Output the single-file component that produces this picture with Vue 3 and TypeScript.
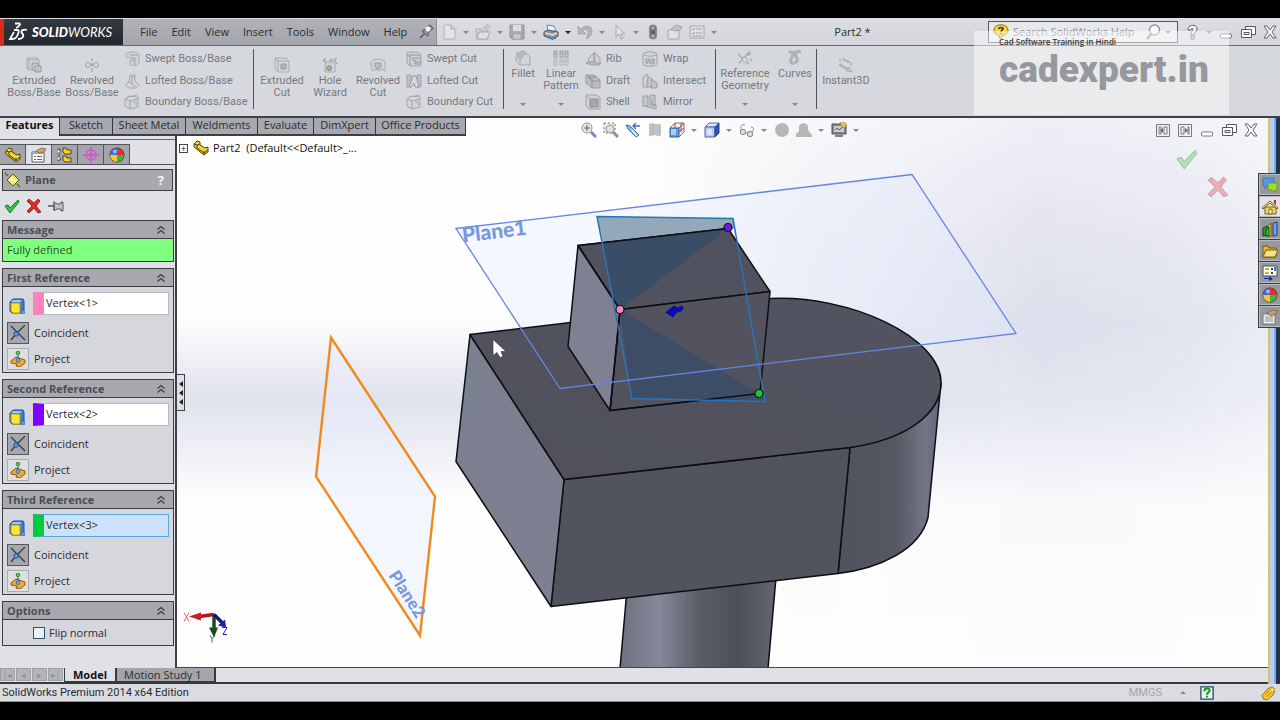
<script setup lang="ts">
import { h, ref } from 'vue'

const g = 'fill="none" stroke="#a2a5aa"'
const icons: Record<string, string> = {
  extrude: `<path ${g} d="M1 1h10l2 2v10H3l-2-2zM1 1l2 2h10M3 3v10"/><path d="M6 6h6v3h3v6H9l-3-3z" fill="#c4c6ca" stroke="#96999e"/><path ${g} d="M9 9h3M9 9v6"/>`,
  revolve: `<path ${g} stroke-width="1.2" d="M8 1v3M8 6v3M8 11v4M6 8h4"/><circle cx="4" cy="8" r="2.5" ${g}/><circle cx="12" cy="8" r="2.5" ${g}/>`,
  sweep: `<path d="M2 3c3-3 12-3 13 1v8c-1 3-6 3-9 2v-4h5V7H5C2 7 1 5 2 3z" fill="#d0d2d6" stroke="#aaadb1"/><path ${g} d="M6 4h8M6 10l2-2h4M11 10v4"/>`,
  loft: `<path d="M6 2h5v6l4 4-3 3H5l-4-3 4-3z" fill="#d3d5d9" stroke="#a6a9ad"/><path ${g} d="M6 2l2 2h3M8 4v7l4 3M5 9l3 2"/>`,
  boundary: `<path d="M1 5l4-3 9 1v10l-8 2-5-3z" fill="#d3d5d9" stroke="#a6a9ad"/><path ${g} d="M1 5l5 2 8-2M6 7v8M3 3l7-1 3-1M9 8h3v3"/>`,
  extcut: `<path d="M1 1h11l3 3v11H4l-3-3z" fill="#d5d7db" stroke="#a9acb0"/><path ${g} d="M1 1l3 3h11M4 4v11"/><path d="M7 7h5v5H7z" fill="#b9bbc0" stroke="#92959a"/><path ${g} d="M7 12l3-3"/>`,
  hole: `<path d="M3 7l5-4 5 4v8H3z" fill="#d3d5d9" stroke="#a9acb0"/><circle cx="7" cy="11" r="2.5" fill="#aaa" stroke="#888b90"/><path ${g} stroke-width="1.4" d="M1 3l3 3M7 6l8-5M12 3l3 4M3 1v3M9 1v2"/>`,
  revcut: `<path d="M1 5c2-4 12-4 14 0v9l-3-2-3 2-3-2-4 2z" fill="#d3d5d9" stroke="#a9acb0"/><path d="M5 6h6v4l-3 2-3-2z" fill="#bec0c4" stroke="#999"/>`,
  cutsweep: `<path d="M1 1h11l3 3v11H4l-3-3z" fill="#cfd1d5" stroke="#a4a7ab"/><path stroke="#94979c" fill="none" d="M4 4h11M4 4v11M6 7h9M6 9h3v4h6M9 11h6M1 5h3"/>`,
  cutloft: `<path d="M1 2h4v12H1zM11 2h4v12h-4z" fill="#bec0c4" stroke="#a0a3a8"/><path d="M7 3h3l3 11H9l-1-4-3 4H3z" fill="#d8dade" stroke="#96999e"/>`,
  fillet: `<path d="M1 8c0-5 4-7 8-7l6 6v8H5l-4-4z" fill="#d3d5d9" stroke="#a4a7ab"/><path d="M1 8c1-4 4-6 8-7l3 3c-4 0-6 3-7 6z" fill="#b7b9bd"/><path ${g} d="M5 15V10l5-6M1 3h3"/>`,
  pattern: `<g fill="#d6d8db" stroke="#999ca1"><rect x="1" y="1" width="3" height="2"/><rect x="1" y="4" width="3" height="3"/><rect x="7" y="1" width="3" height="2"/><rect x="7" y="4" width="3" height="3"/><rect x="12" y="1" width="3" height="2"/><rect x="12" y="4" width="3" height="3"/><g stroke="#b4b6ba"><rect x="1" y="9" width="3" height="2"/><rect x="1" y="12" width="3" height="3"/><rect x="7" y="9" width="3" height="2"/><rect x="7" y="12" width="3" height="3"/><rect x="12" y="9" width="3" height="2"/><rect x="12" y="12" width="3" height="3"/></g></g>`,
  rib: `<path d="M1 12l7-3 7 2v3H6z" fill="#b6b8bd" stroke="#a3a5aa"/><path d="M9 1l6 6v6l-5-2zM3 8l6-6v8l-5 1z" fill="#d0d2d6" stroke="#9c9fa4"/>`,
  draft: `<path d="M1 2h8l6 5v8H7L1 10z" fill="#bbbdc1" stroke="#9c9fa4"/><path d="M1 2l6 6h8M7 8v7M4 4h7M4 4l5 4" fill="none" stroke="#8f9297"/>`,
  shell: `<path d="M1 1h11l3 3v11H4l-3-3z" fill="#d0d2d6" stroke="#a0a3a8"/><path d="M5 5h8v8H5z" fill="#a5a7ac" stroke="#8f9297"/><path ${g} d="M1 1l4 4"/>`,
  wrap: `<path d="M1 3c3-3 11-3 14 0v10c-3 3-11 3-14 0z" fill="#d3d5d9" stroke="#a0a3a8"/><path ${g} d="M1 3c3 3 11 3 14 0"/><path d="M4 7v5h2V8h2v5h2V8h2v5" fill="none" stroke="#909398"/>`,
  intersect: `<path d="M1 4l5-3v13H1zM5 9c0-6 6-6 6 0v5H5z" fill="#d0d2d6" stroke="#a0a3a8"/><path d="M9 6l6 4v5H9z" fill="#c2c4c8" stroke="#999ca1"/>`,
  mirror: `<path d="M1 2h5v10H1zM8 1l5 0v11H8z" fill="#c5c7cb" stroke="#9c9fa4"/><path d="M3 12l11 3v-4l-4-1V5" fill="none" stroke="#96999e"/>`,
  refgeo: `<path ${g} stroke-width="1.2" d="M1 4l5 5M6 8l5-4M8 11l4 3M2 13l3-3M12 1v5M9.500 3.500h5M13 9l2 2"/><path d="M5 8l4-1 2 4-4 2z" fill="#d6d8dc" stroke="#9c9fa4" stroke-dasharray="2 1"/>`,
  curves: `<path d="M2 2c5-1 5 2 3 5s-2 7 2 6 4-4 2-7 1-5 5-5" fill="none" stroke="#a0a3a8" stroke-width="2.8"/><path d="M2 2c5-1 5 2 3 5s-2 7 2 6 4-4 2-7 1-5 5-5" fill="none" stroke="#d2d4d8" stroke-width=".7"/>`,
  instant: `<path ${g} d="M2 2v3M4 1l9 5v3M6 2v2M8 3v2M10 4v2M1 7l10 5"/><path d="M2 7l7 4 2-1 3 5-6-1 1-1-7-4z" fill="#c0c2c6" stroke="#a0a3a8" stroke-width=".7"/>`,
  newdoc: `<path d="M3 1h7l4 4v10H3z" fill="#e2e4e7" stroke="#b0b2b6"/><path ${g} d="M10 1v4h4"/>`,
  open: `<path d="M1 5h5l1 2h6v8H2z" fill="#d1d3d7" stroke="#a9acb0"/><path d="M4 8h11l-3 7H2z" fill="#dddfe3" stroke="#a9acb0"/><path d="M8 5c0-2 2-3 4-3V0l4 3-4 3V4c-2 0-3 1-4 1z" fill="#d1d3d7" stroke="#a9acb0" stroke-width=".7"/>`,
  save: `<path d="M1 1h14v14H3l-2-2z" fill="#a9abb0" stroke="#909398"/><path d="M4 1h8v6H4z" fill="#dcdee2"/><path d="M4 10h8v5H4z" fill="#c9cbcf" stroke="#93969a" stroke-width=".6"/>`,
  print: `<path d="M4 1l7 1 2 5-8 1z" fill="#e8f4fc" stroke="#5d8bb0"/><path d="M1 8l4-2 10 2v4l-5 3-9-3z" fill="#8f949b" stroke="#4f5359"/><path d="M2 9l8 2 4-2" fill="none" stroke="#dfe1e4" stroke-width="1.4"/><path d="M4 13l5 2 4-1" stroke="#3a82b8" stroke-width="1.500" fill="none"/>`,
  undo: `<path d="M1 2v8h8L6 7c3-3 6-1 5 3l-2 5c8-3 8-13 1-13-3 0-4 1-6 3z" fill="#b2b4b9" stroke="#a0a2a7" stroke-width=".7"/>`,
  pick: `<path d="M5 1v12l3-3 2 5 2-1-2-4h4z" fill="#e0e2e5" stroke="#a5a8ac"/>`,
  light: `<rect x="4.500" y="1" width="7" height="14" rx="3" fill="#77797d" stroke="#8a8c90"/><circle cx="8" cy="4" r="1.7" fill="#a9abae"/><circle cx="8" cy="8" r="1.700" fill="#55575b"/><circle cx="8" cy="12" r="1.700" fill="#a9abae"/>`,
  props: `<path d="M1 6h11v9H1z" fill="#dfe1e4" stroke="#a5a8ac"/><path d="M4 5l5-4 6 2-2 3-5 1z" fill="#c0c2c6" stroke="#a0a3a8"/>`,
  options: `<path d="M1 2h14v12H1z" fill="#dddfe2" stroke="#a5a8ac"/><path d="M3 5l1 1 2-2M3 9l1 1 2-2" fill="none" stroke="#909398"/><path ${g} d="M7 5h6M7 9h6M3 12h10"/>`,
  pin: `<path d="M2 14l4-4" stroke="#4f5257" stroke-width="1.300"/><path d="M4 7l5 5c2-1 2-2 1-3l3-3c1 0 2-1 2-2L12 1c-1 0-2 1-2 2L7 6C6 5 5 6 4 7z" fill="#8f9298" stroke="#4d5056"/><circle cx="10" cy="5" r="2.500" fill="#f4f5f7"/>`,
  zoomfit: `<circle cx="6" cy="6" r="5" fill="#e9ebee" stroke="#8c8f94"/><path d="M6 3v6M3 6h6" stroke="#5f6267" stroke-width="1.200"/><path d="M10 10l5 5" stroke="#8088b5" stroke-width="3"/>`,
  zoomarea: `<path d="M1 1h11v10H1z" fill="#eceef0" stroke="#777" stroke-dasharray="2 2"/><circle cx="7" cy="7" r="4" fill="#dfe1e4" stroke="#999"/><path d="M10 10l5 5" stroke="#8f92a5" stroke-width="3"/>`,
  prev: `<path d="M1 3l4 1 9 9-3 2L3 7z" fill="#8fbbe6" stroke="#3971a9"/><path d="M7 8l5 6" stroke="#ddeeff" stroke-width="1.500"/><path d="M15 4H9m2-3L8 4l3 3" stroke="#3a6dc0" stroke-width="1.300" fill="none"/>`,
  section: `<path d="M2 2c3-2 5 1 12 0v11c-2 3-4 0-6 0s-3 2-6 1z" fill="#bfc1c4"/><path d="M6 2v11" stroke="#afb1b4"/>`,
  orient: `<path d="M1 6l5-5h9v9l-5 5" fill="#f5eff0" stroke="#777"/><path d="M10 6l5-5M6 1v5M10 10l5-4M12 1v9" fill="none" stroke="#b0454c"/><path d="M1 6h9v9H1z" fill="#5e9ae0" stroke="#345e96"/><path d="M2 7h5v6H2z" fill="#a7ccf5"/>`,
  display: `<path d="M1 5l4-4h10l-4 4z" fill="#e2eafa" stroke="#5063a5"/><path d="M1 5h10v10H1z" fill="#b5cdf4" stroke="#5063a5"/><path d="M11 5l4-4v10l-4 4z" fill="#2d55bd" stroke="#30468b"/><path d="M3 7h5v6H3z" fill="#d8e6fc"/>`,
  glasses: `<circle cx="4" cy="10" r="2.700" fill="#dadcdf" stroke="#888"/><circle cx="11" cy="12" r="2.700" fill="#dadcdf" stroke="#888"/><path d="M2 8c-1-4 1-6 4-5M7 11l2 0M13 10c2-2 2-5-1-5" fill="none" stroke="#888"/>`,
  sphere: `<circle cx="8" cy="8" r="7" fill="#b5b7b9"/>`,
  scene: `<path d="M3 9V5c0-5 9-5 9 0v3l4 5v2H0v-3z" fill="#b5b7b9"/>`,
  monitor: `<path d="M1 2h14v10H1z" fill="#85878b" stroke="#4c4e52"/><path d="M3 4h10v6H3z" fill="#c9cbcc"/><path d="M4 8l2-2 2 2 4-3" stroke="#55585c" fill="none"/><path d="M4 14h8" stroke="#55585c" stroke-width="1.500"/><path d="M9 0l6 1v4l-4 0z" fill="#f0c45c" stroke="#b4862f" stroke-width=".6"/>`,
  part: `<path d="M1 4l3-3 3 1v3l5 3 3-1v5l-4 3L1 7z" fill="#f0d435" stroke="#4e4410"/><path d="M1 4l3 1v3l7 5 4-3M4 5l3-1M11 11v4" fill="none" stroke="#4e4410"/>`,
  pm: `<path d="M1 5h12v10H1z" fill="#fff" stroke="#55585e"/><path d="M1 5h12v2H1z" fill="#8daedc"/><path d="M3 9h2v1H3zM3 12h2v1H3zM6 9h5v1H6zM6 12h5v1H6z" fill="#666"/><path d="M5 4l5-3 5 1-2 3-5 1z" fill="#d9a55d" stroke="#7d5425" stroke-width=".7"/>`,
  config: `<path d="M2 1v13M2 4h3M2 12h3" stroke="#444" stroke-dasharray="2 1"/><path d="M6 1h3l1 2h4v4H8L6 5zM6 9h3l1 2h4v4H8l-2-2z" fill="#f0d435" stroke="#4e4410"/><path d="M0 3h3v3H0zM0 10h3v3H0z" fill="#fff" stroke="#444" stroke-width=".7"/>`,
  target: `<circle cx="8" cy="8" r="5" fill="none" stroke="#d453cf" stroke-width="1.300"/><circle cx="8" cy="8" r="2" fill="none" stroke="#d453cf"/><path d="M8 0v16M0 8h16" stroke="#d453cf" stroke-width="1.300"/>`,
  ball: `<circle cx="8" cy="8" r="7.500" fill="#333"/><path d="M8 8V1a7 7 0 0 0-7 7z" fill="#4568e0"/><path d="M8 8V1a7 7 0 0 1 7 7z" fill="#e33125"/><path d="M8 8h7a7 7 0 0 1-7 7z" fill="#43b13d"/><path d="M8 8v7a7 7 0 0 1-7-7z" fill="#f2ca2b"/><circle cx="6" cy="4.500" r="2" fill="#fff" opacity=".5"/>`,
  plane: `<path d="M8 2l6 6-6 6-6-6z" fill="#f7e96a" stroke="#5b520f"/><path d="M5 6l6 4" stroke="#fffbd0" stroke-width="2"/><path d="M0 1l3 3M12 12l3 3" stroke="#2e7d32" stroke-width="1.300"/>`,
  ok: `<path d="M1 8l3-1 2 3 8-8 1 2-9 11z" fill="#3dc43f" stroke="#197a21"/>`,
  cancel: `<path d="M3 1l5 4 4-4 2 2-4 5 5 6-3 1-4-5-5 5-2-2 5-5-5-5z" fill="#e22b2b" stroke="#8d1515" stroke-width=".8"/>`,
  push: `<path d="M0 8h6" stroke="#55585d" stroke-width="1.500"/><path d="M6 3v10M6 5h2l1 1h4V4h2v9h-2v-2H9l-1 1H6z" fill="#c0c2c6" stroke="#55585d"/>`,
  cube: `<path d="M1 4l3-3h10l1 2v9l-3 3H3l-2-2z" fill="#3c7be0" stroke="#2b4a86"/><path d="M2 5h9v10H4l-2-2z" fill="#ffe62e" stroke="#b39a10"/><path d="M4 2h9l-2 2H2z" fill="#9cc8fa"/><circle cx="14" cy="14" r="2" fill="#5b9ff0" stroke="#2b5dad" stroke-width=".7"/>`,
  coincident: `<path d="M15 0L6 9 1 15M6 6l9 9M1 1l5 5" stroke="#33363a" stroke-width="1.200" fill="none"/><rect x="4" y="7" width="4" height="4" rx="1" fill="#5f9bf0" stroke="#1d52a8"/>`,
  project: `<path d="M1 10l5-4 9 3v3l-5 4-4-1 1-2-6-1z" fill="#f0a92c" stroke="#8d5a10"/><path d="M8 2v9" stroke="#b0b3b7"/><path d="M6 10l2-5 2 5-2 2z" fill="#6aa4ef" stroke="#27508e" stroke-width=".7"/><circle cx="8" cy="2" r="1.800" fill="#58d45a" stroke="#28862c"/>`,
  chevrons: `<path d="M4.500 7.500L8 4.500 11.500 7.500M4.500 11.500L8 8.500l3.500 3" fill="none" stroke="#3c3e42" stroke-width="1.300"/>`,
  paneL: `<path d="M1.500 2.500h13v12h-13z" fill="#eff0f3" stroke="#777a80"/><path d="M4 5h2v7H4zM9 5h3v7H9z" fill="none" stroke="#777a80"/><path d="M8 6v5L5 8.500z" fill="#666"/>`,
  paneR: `<path d="M1.500 2.500h13v12h-13z" fill="#eff0f3" stroke="#777a80"/><path d="M4 5h3v7H4zM11 5h1v7h-1z" fill="none" stroke="#777a80"/><path d="M8 6v5l3-2.500z" fill="#666"/>`,
  min: `<rect x="2.500" y="10" width="11" height="4" rx="1" fill="#fff" stroke="#75787d"/>`,
  restore: `<path d="M5.500 2.500h10v8h-10z" fill="#fff" stroke="#55585d"/><path d="M1.500 5.500h10v8h-10z" fill="#fff" stroke="#55585d"/><path d="M4 8.500h5v2H4z" fill="none" stroke="#55585d"/>`,
  close: `<path d="M2 2h3l3 4 3-4h3L10 8l4 6h-3l-3-4-3 4H2l4-6z" fill="#fff" stroke="#606368"/>`,
  help: `<path d="M4 6c0-6 9-6 9-1 0 3-3 3-3 6H7c0-4 2-4 2-6 0-1-2-1-2 1zM7 12h3v3H7z" fill="#f6f7f8" stroke="#55585d"/>`,
  bubble: `<path d="M1 6c0-7 14-7 14 0 0 4-3 5-5 5l-3 4-1-4C3 11 1 9 1 6z" fill="#f3d045" stroke="#96720f"/><path d="M6 5c0-2 4-2 4 0 0 1-2 1-2 3M8 9v1" fill="none" stroke="#333" stroke-width="1.500"/>`,
  search: `<circle cx="9.500" cy="6" r="5" fill="#f7f8fa" stroke="#8f9297" stroke-width="1.300"/><path d="M6 10l-4 5" stroke="#8f9297" stroke-width="2.500"/>`,
  chat: `<path d="M1 1h11v8H6l-3 3V9H1z" fill="#4d9ae8" stroke="#2c6cb5" stroke-width=".7"/><path d="M6 6h9v7h-2v2l-3-2H6z" fill="#9edc2a" stroke="#5f9412" stroke-width=".7"/>`,
  home: `<path d="M3 8h11v7H3z" fill="#f3d75b" stroke="#7d6210"/><path d="M0 9l8-7 8 7-1 1-7-6-7 6z" fill="#fff0a0" stroke="#7d6210"/><path d="M12 1h2v5l-2-2z" fill="#c62828"/><path d="M7 10h3v5H7z" fill="#fff" stroke="#7d6210"/>`,
  books: `<path d="M1 7l4-2v9l-4 1z" fill="#2fa12f" stroke="#123f12"/><path d="M6 5l3-3v13H6z" fill="#f0d435" stroke="#6f5b10"/><path d="M11 2l4-1v13l-4 1z" fill="#6aa4ef" stroke="#27406e"/><path d="M4 8l3-2v9H4z" fill="#37c437" stroke="#123f12"/>`,
  folder: `<path d="M1 3h5l1 2h7v9H1z" fill="#e3b33b" stroke="#7d5a10"/><path d="M4 7h12l-3 7H1z" fill="#fde07c" stroke="#7d5a10"/>`,
  palette: `<path d="M1 1h14v10H1z" fill="#fff" stroke="#355"/><path d="M3 3h4v2H3zM3 7h4v2H3z" fill="#c8b731"/><path d="M9 3h2v2H9zM9 7h2v2H9z" fill="#444"/><path d="M12 2h2v4h-2z" fill="#4a72c8"/><path d="M2 13h5v-2l4 3-4 2v-2H2z" fill="#2222c8"/>`,
  sheet: `<path d="M1 5h12v10H1z" fill="#eceef0" stroke="#77797e"/><path d="M3 8h8M3 10h8M3 12h8" stroke="#8c8f94"/><path d="M5 4l5-3 6 1-2 3-5 2z" fill="#c99a62" stroke="#7d5425" stroke-width=".7"/>`,
  tag: `<path d="M1 11l7-8 5-2 3 3-2 6-7 6-4-1z" fill="#f5c52e" stroke="#8a6410"/><path d="M5 10l5-5M7 12l5-5" stroke="#a77a12"/><circle cx="13" cy="4" r="1" fill="#fff"/>`,
  qbox: `<path d="M1 1h14v14H1z" fill="#e9f4ea" stroke="#27486e" stroke-width="1.500"/><path d="M5 6c0-4 6-4 6-1 0 2-3 2-3 5M8 11v2" fill="none" stroke="#149a1c" stroke-width="2.400"/>`,
}
const Ico = (p: { n: string }) =>
  h('svg', { class: 'ico', viewBox: '0 0 16 16', 'aria-hidden': 'true', innerHTML: icons[p.n] })
Ico.props = ['n']

const menus = ['File', 'Edit', 'View', 'Insert', 'Tools', 'Window', 'Help']
const quick = [
  { n: 'newdoc', t: 'New', a: 1 }, { n: 'open', t: 'Open', a: 1 }, { n: 'save', t: 'Save', a: 1 },
  { n: 'print', t: 'Print', a: 2 }, { n: 'undo', t: 'Undo', a: 1 }, { n: 'pick', t: 'Select', a: 1 },
  { n: 'light', t: 'Rebuild', a: 0 }, { n: 'props', t: 'File properties', a: 0 }, { n: 'options', t: 'Options', a: 1 },
]

interface Big { n: string; l: string; w: number; drop?: boolean }
interface Small { n: string; l: string }
interface Group { id: string; big: Big[]; cols: Small[][] }
const groups: Group[] = [
  {
    id: 'boss',
    big: [{ n: 'extrude', l: 'Extruded\nBoss/Base', w: 58 }, { n: 'revolve', l: 'Revolved\nBoss/Base', w: 58 }],
    cols: [[{ n: 'sweep', l: 'Swept Boss/Base' }, { n: 'loft', l: 'Lofted Boss/Base' }, { n: 'boundary', l: 'Boundary Boss/Base' }]],
  },
  {
    id: 'cut',
    big: [{ n: 'extcut', l: 'Extruded\nCut', w: 48 }, { n: 'hole', l: 'Hole\nWizard', w: 48 }, { n: 'revcut', l: 'Revolved\nCut', w: 48 }],
    cols: [[{ n: 'cutsweep', l: 'Swept Cut' }, { n: 'cutloft', l: 'Lofted Cut' }, { n: 'boundary', l: 'Boundary Cut' }]],
  },
  {
    id: 'feat',
    big: [{ n: 'fillet', l: 'Fillet', w: 38, drop: true }, { n: 'pattern', l: 'Linear\nPattern', w: 38, drop: true }],
    cols: [
      [{ n: 'rib', l: 'Rib' }, { n: 'draft', l: 'Draft' }, { n: 'shell', l: 'Shell' }],
      [{ n: 'wrap', l: 'Wrap' }, { n: 'intersect', l: 'Intersect' }, { n: 'mirror', l: 'Mirror' }],
    ],
  },
  {
    id: 'ref',
    big: [{ n: 'refgeo', l: 'Reference\nGeometry', w: 58, drop: true }, { n: 'curves', l: 'Curves', w: 42, drop: true }],
    cols: [],
  },
  { id: 'inst', big: [{ n: 'instant', l: 'Instant3D', w: 58 }], cols: [] },
]

const tabs = [
  { l: 'Features', w: 60 }, { l: 'Sketch', w: 53 }, { l: 'Sheet Metal', w: 73 }, { l: 'Weldments', w: 72 },
  { l: 'Evaluate', w: 56 }, { l: 'DimXpert', w: 62 }, { l: 'Office Products', w: 90 },
]
const panelTabs = ['part', 'pm', 'config', 'target', 'ball']
const refs = ref([
  { id: 'r1', title: 'First Reference', value: 'Vertex<1>', tone: 'pink' },
  { id: 'r2', title: 'Second Reference', value: 'Vertex<2>', tone: 'violet' },
  { id: 'r3', title: 'Third Reference', value: 'Vertex<3>', tone: 'green' },
])
const flip = ref(false)
const viewTools = [
  { n: 'zoomfit', a: 0 }, { n: 'zoomarea', a: 0 }, { n: 'prev', a: 0 }, { n: 'section', a: 0 }, { n: 'orient', a: 1 },
  { n: 'display', a: 1 }, { n: 'glasses', a: 1 }, { n: 'sphere', a: 0 }, { n: 'scene', a: 1 }, { n: 'monitor', a: 1 },
]
const taskTabs = ['chat', 'home', 'books', 'folder', 'palette', 'ball', 'sheet']
const steps = ['|◂', '◂', '▸', '▸|']
</script>

<template>
  <div class="screen">
    <div class="window">
      <header class="titlebar">
        <div class="brand">
          <svg class="ds" viewBox="0 0 20 20" aria-hidden="true">
            <path d="M7 1.500h4c2 0 1 3-3 4.500M6 8h3c4-1 0 9-4 9H2l4-7M19 8c-4-1-7 1-5 3s2 6-4 6" fill="none" stroke="#fff" stroke-width="1.800" />
          </svg>
          <span class="wordmark"><b>SOLID</b>WORKS</span>
        </div>
        <nav class="menus">
          <button v-for="m in menus" :key="m" type="button">{{ m }}</button>
          <button type="button" aria-label="Pin menu"><Ico n="pin" /></button>
        </nav>
        <div class="quick">
          <button v-for="q in quick" :key="q.n" type="button" :aria-label="q.t" :class="{ drop: q.a, live: q.a === 2 }">
            <Ico :n="q.n" /><i v-if="q.a" class="caret"></i>
          </button>
        </div>
        <h1 class="doc">Part2 *</h1>
        <div class="search">
          <Ico n="bubble" />
          <input type="text" placeholder="Search SolidWorks Help" aria-label="Search SolidWorks Help" />
          <button type="button" aria-label="Search"><Ico n="search" /></button>
          <i class="caret"></i>
        </div>
        <div class="winctl">
          <button type="button" aria-label="Help"><Ico n="help" /></button>
          <i class="caret"></i>
          <button type="button" aria-label="Minimize"><Ico n="min" /></button>
          <button type="button" aria-label="Restore"><Ico n="restore" /></button>
          <button type="button" aria-label="Close"><Ico n="close" /></button>
        </div>
      </header>

      <div class="ribbon">
        <section v-for="gr in groups" :key="gr.id" class="group" :class="gr.id">
          <button v-for="b in gr.big" :key="b.n" type="button" class="big" :class="{ dropdown: b.drop }" :style="{ width: b.w + 'px' }">
            <Ico :n="b.n" />
            <span>{{ b.l }}</span>
            <i v-if="b.drop" class="caret"></i>
          </button>
          <div v-for="(c, i) in gr.cols" :key="i" class="col">
            <button v-for="s in c" :key="s.l" type="button" class="small"><Ico :n="s.n" />{{ s.l }}</button>
          </div>
        </section>
      </div>

      <div class="middle">
        <div class="workspace">
          <nav class="tabs">
            <button v-for="(t, i) in tabs" :key="t.l" type="button" :class="{ on: i === 0 }" :style="{ width: t.w + 'px' }">{{ t.l }}</button>
          </nav>

          <aside class="panel">
            <div class="ptabs">
              <button v-for="(p, i) in panelTabs" :key="p" type="button" :class="{ on: i === 1 }" :aria-label="p"><Ico :n="p" /></button>
            </div>
            <div class="head"><Ico n="plane" /><h2>Plane</h2><button type="button" aria-label="Help">?</button></div>
            <div class="actions">
              <button type="button" aria-label="OK"><Ico n="ok" /></button>
              <button type="button" aria-label="Cancel"><Ico n="cancel" /></button>
              <button type="button" aria-label="Keep visible"><Ico n="push" /></button>
            </div>
            <section class="box message">
              <h3>Message<Ico n="chevrons" /></h3>
              <p>Fully defined</p>
            </section>
            <section v-for="r in refs" :key="r.id" class="box">
              <h3>{{ r.title }}<Ico n="chevrons" /></h3>
              <div class="body">
                <div class="row pick">
                  <label :for="r.id" :aria-label="r.title"><Ico n="cube" /></label>
                  <div class="field" :class="r.tone"><input :id="r.id" v-model="r.value" type="text" /></div>
                </div>
                <button type="button" class="row opt on"><span class="tile"><Ico n="coincident" /></span>Coincident</button>
                <button type="button" class="row opt"><span class="tile"><Ico n="project" /></span>Project</button>
              </div>
            </section>
            <section class="box options">
              <h3>Options<Ico n="chevrons" /></h3>
              <label class="flip"><input v-model="flip" type="checkbox" />Flip normal</label>
            </section>
          </aside>

          <main class="view">
            <svg class="model" viewBox="177 118 1091 550" preserveAspectRatio="xMidYMid slice" role="img" aria-label="Part model with reference planes">
              <defs>
                <linearGradient id="haze" x1="0" y1="0" x2="0" y2="1">
                  <stop offset="0" stop-color="#eff0f6" /><stop offset=".2" stop-color="#e4e5ef" /><stop offset=".38" stop-color="#dcdfec" />
                  <stop offset=".52" stop-color="#e3e5f0" /><stop offset=".7" stop-color="#f9f9fc" /><stop offset="1" stop-color="#fdfdff" />
                </linearGradient>
                <linearGradient id="fade"><stop offset="0" stop-color="#000" /><stop offset=".5" stop-color="#000" /><stop offset=".82" stop-color="#fff" /><stop offset=".92" stop-color="#ddd" /><stop offset="1" stop-color="#999" /></linearGradient>
                <mask id="side"><rect x="0" y="100" width="1268" height="600" fill="url(#fade)" /></mask>
                <linearGradient id="band" x1="0" y1="0" x2="0" y2="1">
                  <stop offset="0" stop-color="#fff" /><stop offset=".45" stop-color="#e0e2ec" /><stop offset="1" stop-color="#fff" />
                </linearGradient>
                <linearGradient id="barrel">
                  <stop offset="0" stop-color="#6e7080" /><stop offset=".25" stop-color="#878899" /><stop offset=".5" stop-color="#5b5d69" />
                  <stop offset=".75" stop-color="#4c4e59" /><stop offset="1" stop-color="#646673" />
                </linearGradient>
                <linearGradient id="round">
                  <stop offset="0" stop-color="#50525c" /><stop offset=".55" stop-color="#555762" /><stop offset=".85" stop-color="#737485" /><stop offset="1" stop-color="#64657a" />
                </linearGradient>
                <linearGradient id="top" x1="0" y1="1" x2="1" y2="0"><stop offset="0" stop-color="#4f5059" /><stop offset="1" stop-color="#525463" /></linearGradient>
                <linearGradient id="left" x1="0" y1="0" x2="1" y2="1"><stop offset="0" stop-color="#77818f" /><stop offset=".4" stop-color="#7d7f90" /><stop offset="1" stop-color="#7e7f90" /></linearGradient>
              </defs>
              <rect x="-400" y="-200" width="2400" height="1400" fill="#fefefe" />
              <rect x="-400" y="315" width="1400" height="190" fill="url(#band)" />
              <rect x="177" y="118" width="1091" height="550" fill="url(#haze)" mask="url(#side)" />

              <path d="M331 338L435 497L420 636L316 477z" fill="#e8eeff" fill-opacity=".45" stroke="#f08a1e" stroke-width="2.400" />
              <text class="plane" transform="translate(388 576) rotate(57)" font-size="17">Plane2</text>
              <path d="M456 229L912 175L1016 334L560 389z" fill="#dfe8ff" fill-opacity=".3" />

              <g stroke="#0d0e12" stroke-width="1.500" stroke-linejoin="round">
                <path d="M627 590L776 578L768 669H620z" fill="url(#barrel)" />
                <path d="M850 448C905 440 941 415 941 383L928 518C920 550 880 569 838 574z" fill="url(#round)" />
                <path d="M564 480L850 448L838 574L551 607z" fill="#51535e" />
                <path d="M470 335L564 480L551 607L456 462z" fill="url(#left)" />
                <path d="M470 335L770 299C850 295 941 338 941 383C941 415 905 440 850 448L564 480z" fill="url(#top)" />
                <path d="M597 217L733 219L735 229L603 244z" fill="#93a8b9" stroke="none" />
                <path d="M578 246L728 229L770 292L620 310z" fill="#51525f" />
                <path d="M620 310L770 292L760 394L610 411z" fill="#52535f" />
                <path d="M578 246L620 310L610 411L568 347z" fill="#7f8094" />
              </g>
              <path d="M603 243L728 229L620 310L614 300z" fill="#3a4d66" />
              <path d="M620 310L759 394L765 402L632 399z" fill="#3a4d66" fill-opacity=".9" />
              <path d="M578 246L728 229M578 246L620 310L610 411L760 394" fill="none" stroke="#0d0e12" stroke-width="1.500" />
              <path d="M597 217L733 219L765 402L632 399z" fill="none" stroke="#2874b8" stroke-width="1.500" />
              <path d="M456 229L912 175L1016 334L560 389z" fill="none" stroke="#6484e4" stroke-width="1.300" />
              <text class="plane" transform="translate(463 243) rotate(-7)" font-size="21">Plane1</text>
              <path d="M665 313l9-7 4 2 4-2 2 3-3 3-4 1-4 5z" fill="#0b0bab" />
              <g stroke="#111" stroke-width="1.200">
                <circle cx="728" cy="228" r="4" fill="#7413ee" />
                <circle cx="620" cy="310" r="4" fill="#fb85bd" />
                <circle cx="759" cy="394" r="4" fill="#17c53c" />
              </g>
              <path d="M493 340v16l4-3 3 5 3-1-2-5h5z" fill="#fff" stroke="#333" stroke-width=".6" />

              <g>
                <path d="M214 615L199 617" stroke="#b5141e" stroke-width="3.500" /><path d="M189 617l12-4v8z" fill="#c9202a" />
                <path d="M214 615v14" stroke="#1d4a24" stroke-width="3.500" /><path d="M209 628h9l-4 10z" fill="#1d4a24" />
                <path d="M214 615l8 8" stroke="#15157d" stroke-width="3.500" /><path d="M226 628l-8-2 7-6z" fill="#1c1cb5" />
                <path d="M184 613l5 9M189 613l-5 9" stroke="#e2606c" /><path d="M210 636l2 3 3-3M212 639v4" fill="none" stroke="#3c6a45" />
                <path d="M222 628h5l-4 7h4" fill="none" stroke="#2525b0" />
              </g>
            </svg>
            <div class="viewtools">
              <button v-for="v in viewTools" :key="v.n" type="button" :aria-label="v.n" :class="{ drop: v.a }"><Ico :n="v.n" /><i v-if="v.a" class="caret"></i></button>
            </div>
            <div class="docctl">
              <button v-for="c in ['paneL', 'paneR', 'min', 'restore', 'close']" :key="c" type="button" :aria-label="c"><Ico :n="c" /></button>
            </div>
            <div class="tree"><button type="button" aria-label="Expand">+</button><Ico n="part" /><span>Part2&nbsp; (Default&lt;&lt;Default&gt;_...</span></div>
            <button type="button" class="confirm yes" aria-label="Accept"><Ico n="ok" /></button>
            <button type="button" class="confirm no" aria-label="Discard"><Ico n="cancel" /></button>
            <button type="button" class="handle" aria-label="Collapse panel"><i></i><i></i><i></i></button>
          </main>

          <footer class="sheets">
            <button v-for="s in steps" :key="s" type="button" class="step">{{ s }}</button>
            <button type="button" class="sheet on">Model</button>
            <button type="button" class="sheet">Motion Study 1</button>
          </footer>
        </div>
        <div class="edge"></div>
        <div class="tasks">
          <button v-for="(t, i) in taskTabs" :key="t" type="button" :class="{ on: i === 1 }" :aria-label="t"><Ico :n="t" /></button>
        </div>
      </div>

      <footer class="status">
        <span>SolidWorks Premium 2014 x64 Edition</span>
        <span class="units">MMGS</span><i class="caret up"></i>
        <button type="button" aria-label="Quick tips"><Ico n="qbox" /></button>
        <button type="button" aria-label="Tags"><Ico n="tag" /></button>
      </footer>

      <div class="watermark"><small>Cad Software Training in Hindi</small><strong>cadexpert.in</strong></div>
    </div>
  </div>
</template>

<style>
html, body { background: #000; }
</style>

<style scoped>
* { box-sizing: border-box; margin: 0; }
.screen {
  min-height: 100vh; padding: 18px 0; background: #000; display: flex; flex-direction: column;
  font: 11px/12px "Open Sans", "Noto Sans", sans-serif; color: #2b2c30;
}
.window { position: relative; flex: 1; display: flex; flex-direction: column; background: #dfe1e6; border-bottom: 1px solid #a58e5a; }
button { border: 0; padding: 0; background: none; font: inherit; color: inherit; display: flex; align-items: center; justify-content: center; white-space: nowrap; }
input { font: inherit; color: inherit; min-width: 0; }
.ico { width: 16px; height: 16px; flex: none; display: block; }
.caret { border: 3px solid transparent; border-top-color: #85888d; border-bottom: 0; flex: none; }
.caret.up { border-bottom: 3px solid #85888d; border-top: 0; }

.titlebar { display: flex; align-items: stretch; height: 28px; padding-top: 1px; border-bottom: 1px solid #66686d; background: linear-gradient(#dcdee3, #d3d5da); }
.brand { width: 123px; flex: none; display: flex; align-items: center; gap: 4px; padding-left: 4px; color: #fff; background: linear-gradient(#353b43, #22262d); border-left: 4px solid #dc291e; }
.ds { width: 20px; height: 20px; }
.wordmark { font: italic 400 13px/20px Lato, sans-serif; }
.wordmark b { font-weight: 900; }
.menus { display: flex; align-items: center; gap: 14px; padding: 0 5px 0 17px; width: 314px; background: linear-gradient(#b0b2b7, #a3a5aa); border-right: 1px solid #8e9095; flex: none; }
.menus button:last-child { margin-left: -3px; }
.quick { display: flex; align-items: center; padding-left: 4px; flex: none; gap: 6px; }
.quick .drop { gap: 6px; width: 28px; justify-content: flex-start; }
.quick .live .caret { border-top-color: #222; }
.doc { flex: 1; text-align: center; font-size: 11px; font-weight: 400; line-height: 26px; }
.search { width: 190px; flex: none; display: flex; align-items: center; gap: 4px; margin: 2px 0 2px; padding: 0 6px 0 4px; border: 1px solid #55575c; background: #e6e8ec; }
.search input { flex: 1; border: 0; background: none; outline: 0; padding: 0; color: #8a8c90; }
.search input::placeholder { color: #8a8c90; opacity: 1; }
.winctl { display: flex; align-items: center; gap: 6px; padding: 0 3px 0 6px; flex: none; width: 102px; justify-content: space-between; }

.ribbon { display: flex; height: 72px; border-bottom: 2px solid #3f4146; background: linear-gradient(#d5d8dc, #d7d8de); color: #75787e; font-family: Roboto, "Open Sans", sans-serif; }
.group { display: flex; padding: 2px 0; position: relative; flex: none; }
.group:not(:last-child)::after { content: ""; width: 1px; background: #505257; position: absolute; right: 0; top: 3px; bottom: 7px; }
.boss { width: 254px; padding-left: 5px; }
.cut { width: 250px; padding-left: 4px; }
.feat { width: 212px; }
.ref { width: 101px; }
.big { flex-direction: column; justify-content: flex-start; padding-top: 9px; flex: none; }
.big span { white-space: pre-line; text-align: center; }
.big.dropdown { padding-top: 2px; position: relative; }
.big .caret { position: absolute; bottom: 8px; }
.big .ico { margin-bottom: 2px; }
.cut .col { padding-left: 4px; }
.col { display: flex; flex-direction: column; height: 65px; padding-left: 3px; }
.small { gap: 5px; flex: 1; justify-content: flex-start; }
.feat .col { width: 57px; padding-left: 5px; }

.middle { flex: 1; display: flex; position: relative; }
.workspace { flex: 1; display: grid; grid-template: 20px 1fr 16px / 177px 1fr; background: #dfe1e6; min-width: 0; }
.tabs { grid-area: 1 / 1 / 2 / 3; justify-self: start; z-index: 2; display: flex; height: 18px; background: #a7a9ae; border-bottom: 2px solid #3d3f43; }
.tabs button { border-right: 1px solid #33353a; height: 16px; padding-bottom: 2px; }
.tabs .on { background: #dfe1e6; font-weight: 700; color: #111; height: 18px; padding-bottom: 4px; }
.view { grid-area: 1 / 2 / 3 / 3; position: relative; overflow: hidden; border-bottom: 1px solid #44464b; min-height: 0; }
.panel { grid-area: 1 / 1 / 3 / 2; padding: 21px 2px 0; border-right: 2px solid #3f4146; background: #dfe1e6; display: flex; flex-direction: column; gap: 6px; }
.sheets { grid-area: 3 / 1 / 4 / 3; display: flex; border-bottom: 2px solid #37393d; }
.model { position: absolute; inset: 0; width: 100%; height: 100%; }
.plane { font-family: Lato, sans-serif; font-weight: 900; fill: #7897df; }

.ptabs { display: flex; margin: 0 -2px -2px; padding-top: 4px; border-top: 1px solid #66686c; border-bottom: 1px solid #505257; height: 26px; }
.ptabs button { width: 26px; background: #a3a5aa; border: 1px solid #55575c; border-left: 0; border-bottom: 0; }
.ptabs .on { background: #dfe1e6; }
.head { display: flex; align-items: center; gap: 4px; height: 22px; padding: 0 8px 0 2px; border: 1px solid #3b3d41; background: #a7a9ae; flex: none; }
.head h2 { font-size: 11px; font-weight: 700; color: #4b4d53; flex: 1; }
.head button { color: #f4f5f7; font-weight: 700; font-size: 13px; }
.actions { display: flex; gap: 6px; height: 17px; padding-left: 2px; align-items: center; }
.box { border: 1px solid #3b3d41; background: #d5d7dc; width: 172px; }
.box h3 { display: flex; justify-content: space-between; align-items: center; height: 18px; padding: 0 4px; background: #a7a9ae; border-bottom: 1px solid #3b3d41; font-size: 11px; font-weight: 700; color: #4b4d53; }
.message p { height: 22px; line-height: 22px; padding-left: 4px; background: #80ff80; color: #1e5424; }
.body { padding: 5px 4px 2px; display: flex; flex-direction: column; gap: 3px; }
.row { display: flex; align-items: center; gap: 5px; height: 23px; }
.pick { margin-bottom: 3px; }
.pick label { width: 21px; padding: 4px 0 0 2px; }
.field { flex: 1; display: flex; height: 23px; background: #fff; border: 1px solid #b6b8bd; border-left: 11px solid #ff80be; }
.field.violet { border-left-color: #7f00ff; }
.field.green { border-left-color: #00cc3d; background: #cde2fa; border-top-color: #5aa9dd; border-right-color: #5aa9dd; border-bottom-color: #5aa9dd; }
.field input { border: 0; background: none; outline: 0; width: 100%; padding: 0 2px 2px; }
.opt { justify-content: flex-start; }
.tile { width: 22px; height: 22px; border: 1px solid #a9abb0; background: #dddfe3; display: flex; align-items: center; justify-content: center; }
.on .tile { background: #a5a7ac; border-color: #55575c; }
.flip { display: flex; align-items: center; gap: 4px; height: 25px; padding-left: 30px; }
.flip input { appearance: none; width: 12px; height: 12px; border: 1px solid #2c5078; background: #edf1f6; }

.viewtools { position: absolute; top: 4px; left: 0; right: 0; display: flex; justify-content: center; gap: 6px; padding-right: 4px; }
.viewtools .drop { width: 29px; gap: 6px; justify-content: flex-start; }
.docctl { position: absolute; top: 4px; right: 9px; display: flex; gap: 6px; }
.tree { position: absolute; top: 22px; left: 2px; display: flex; align-items: center; color: #111; }
.tree button { width: 9px; height: 9px; border: 1px solid #444; line-height: 7px; font-size: 9px; margin-right: 5px; }
.tree span { margin-left: 4px; line-height: 16px; }
.confirm { position: absolute; opacity: .32; }
.confirm .ico { width: 22px; height: 22px; }
.yes { top: 30px; right: 70px; }
.no { top: 58px; right: 39px; }
.handle { position: absolute; left: 0; top: 256px; width: 8px; height: 37px; background: #dfe1e6; border: 1px solid #3f4146; border-left: 0; flex-direction: column; gap: 3px; }
.handle i { border: 3px solid transparent; border-right: 4px solid #222; border-left: 0; }

.step { width: 15px; border: 1px solid #9fa1a6; background: #b3b5ba; color: #909297; font-size: 9px; margin-right: 1px; height: 13px; }
.sheet { background: #a3a5aa; border-right: 2px solid #37393d; border-bottom: 1px solid #37393d; height: 14px; padding: 0 12px 0 7px; }
.sheet.on { background: #dfe1e6; font-weight: 700; color: #111; padding: 0 8px; border-left: 1px solid #37393d; }
.edge { width: 12px; background: linear-gradient(90deg, #d9c36a 0 2px, #b9cdf2 2px 6px, #7ea9e0 6px 8px, #1d3550 8px); }
.tasks { position: absolute; right: 0; top: 55px; width: 22px; display: flex; flex-direction: column; background: #3d3f43; padding: 1px 0 1px 1px; gap: 1px; }
.tasks button { height: 21px; background: #97999e; border: 1px solid #b8babf; border-right: 0; }
.tasks .on { background: #e1e3e7; }
.status { display: flex; align-items: center; height: 17px; padding: 0 5px 0 2px; background: #dadce1; color: #2b2c30; font-family: Roboto, "Open Sans", sans-serif; }
.status .units { margin-left: auto; color: #a3a5aa; margin-right: 18px; }
.status button { margin-left: 14px; }
.status button .ico { width: 14px; height: 14px; }
.status button:last-child { margin-left: 47px; }

.watermark { position: absolute; top: 13px; right: 51px; width: 255px; height: 84px; background: rgba(255, 255, 255, .48); pointer-events: none; display: flex; flex-direction: column; padding-left: 25px; }
.watermark small { font: 600 8px/10px "Open Sans", sans-serif; color: #3c3d40; margin-top: 6px; white-space: nowrap; }
.watermark strong { font: 900 37px/46px Roboto, sans-serif; color: #96989d; white-space: nowrap; }
</style>
